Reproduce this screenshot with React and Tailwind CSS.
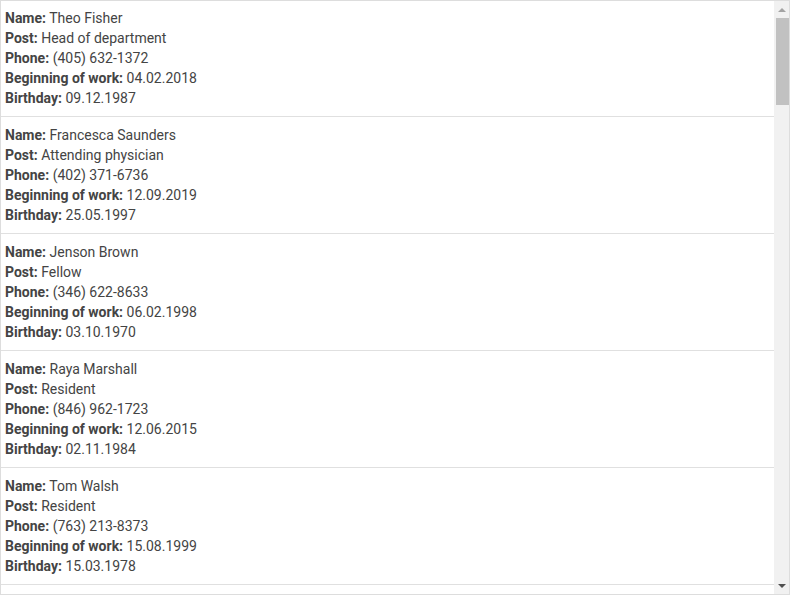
const employees = [
  { name: "Theo Fisher", post: "Head of department", phone: "(405) 632-1372", start: "04.02.2018", birthday: "09.12.1987" },
  { name: "Francesca Saunders", post: "Attending physician", phone: "(402) 371-6736", start: "12.09.2019", birthday: "25.05.1997" },
  { name: "Jenson Brown", post: "Fellow", phone: "(346) 622-8633", start: "06.02.1998", birthday: "03.10.1970" },
  { name: "Raya Marshall", post: "Resident", phone: "(846) 962-1723", start: "12.06.2015", birthday: "02.11.1984" },
  { name: "Tom Walsh", post: "Resident", phone: "(763) 213-8373", start: "15.08.1999", birthday: "15.03.1978" },
];

function Field({ label, value }) {
  return (
    <div className="leading-5 whitespace-nowrap">
      <span className="font-bold">{label}:</span> {value}
    </div>
  );
}

// Fake classic scrollbar (headless browser draws overlay scrollbars)
function Scrollbar() {
  return (
    <div className="w-[15px] flex-none flex flex-col bg-[#f1f1f1]">
      <div className="h-[17px] flex items-center justify-center">
        <div className="w-0 h-0 border-x-[4px] border-x-transparent border-b-[4px] border-b-[#a3a3a3]" />
      </div>
      <div className="flex-1">
        <div className="h-[87px] ml-[2px] bg-[#c1c1c1]" />
      </div>
      <div className="h-[17px] flex items-center justify-center">
        <div className="w-0 h-0 border-x-[4px] border-x-transparent border-t-[4px] border-t-[#505050]" />
      </div>
    </div>
  );
}

export default function App() {
  return (
    <div
      className="w-[790px] h-[595px] border border-[#dddddd] bg-white flex text-[14px] text-[#444444]"
      style={{ fontFamily: "Roboto, 'Liberation Sans', sans-serif" }}
    >
      <div className="flex-1 overflow-hidden">
        {employees.map((e, i) => (
          <div
            key={i}
            className="pl-1 pt-2 pb-2 first:pt-[7px] border-b border-[#e0e0e0]"
          >
            <Field label="Name" value={e.name} />
            <Field label="Post" value={e.post} />
            <Field label="Phone" value={e.phone} />
            <Field label="Beginning of work" value={e.start} />
            <Field label="Birthday" value={e.birthday} />
          </div>
        ))}
      </div>
      <Scrollbar />
    </div>
  );
}
